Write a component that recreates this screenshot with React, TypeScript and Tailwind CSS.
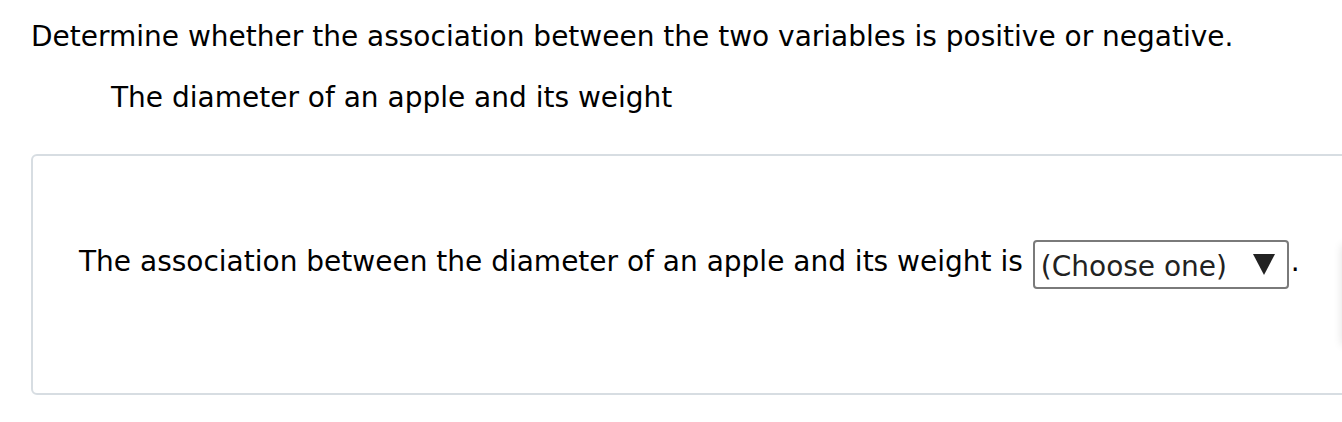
export default function App() {
  return (
    <div className="relative w-[1342px] h-[422px] overflow-hidden bg-white text-black font-['DejaVu_Sans',Verdana,sans-serif] text-[28px]">
      <div className="pl-[31px] pt-[17px]">
        <p className="leading-[40px]">
          Determine whether the association between the two variables is positive or negative.
        </p>
        <p className="pl-[80px] mt-[21px] leading-[40px]">
          The diameter of an apple and its weight
        </p>
        <div className="mt-[36px] w-[1330px] h-[241px] border-2 border-[#d7dde2] rounded-[6px] pl-[46px] pt-[84px]">
          <div className="flex items-start leading-[40px]">
            <span className="mt-[2px]">
              The association between the diameter of an apple and its weight is
            </span>
            <span className="ml-[10px] flex items-start justify-between w-[256px] h-[49px] border-2 border-[#7a7a7a] rounded-[4px] pl-[6px] pr-[12px] text-[#222]">
              <span className="pt-[5px]">(Choose one)</span>
              <svg className="self-center" width="22" height="21" viewBox="0 0 22 21">
                <path d="M0 0H22L11 21Z" fill="#222" />
              </svg>
            </span>
            <span className="mt-[2px] ml-[2px]">.</span>
          </div>
        </div>
      </div>
      <div className="absolute left-[1342px] top-[245px] w-[20px] h-[100px] shadow-[0_0_10px_rgba(0,0,0,0.12)]" />
    </div>
  );
}
